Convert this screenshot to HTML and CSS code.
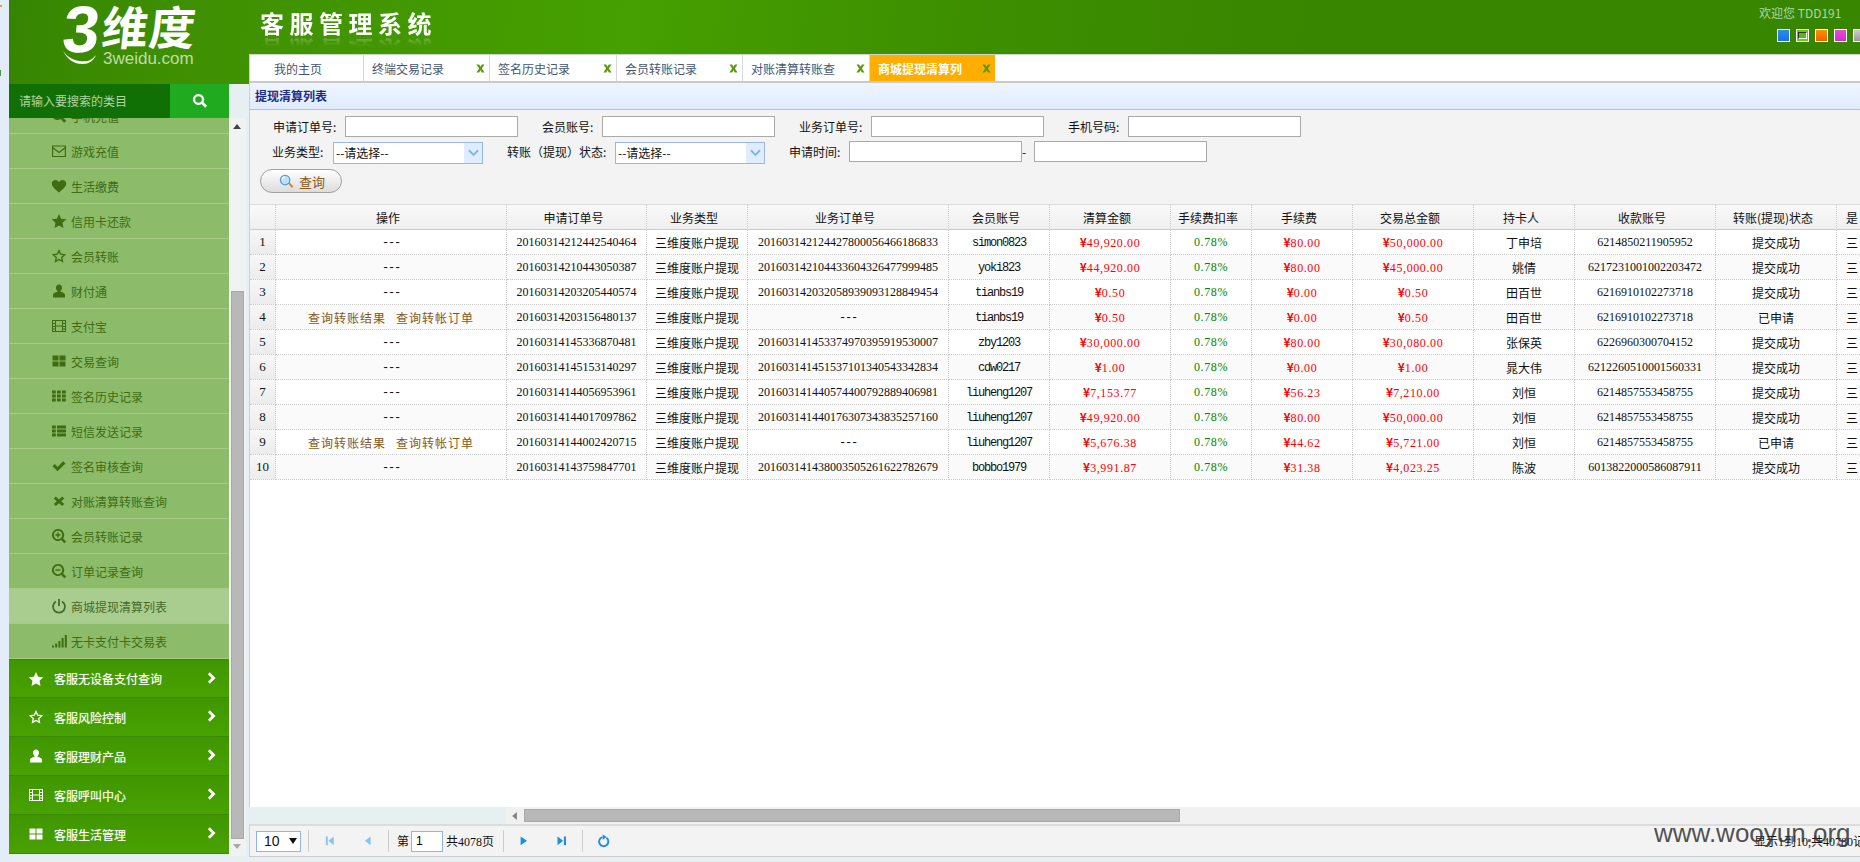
FILE: index.html
```html
<!DOCTYPE html>
<html lang="zh-CN">
<head>
  <meta charset="UTF-8">
  <title>客服管理系统</title>
  <link rel="stylesheet" href="styles.css">
</head>
<body>
  <svg class="sprite" xmlns="http://www.w3.org/2000/svg">
    <symbol id="i-search" viewBox="0 0 16 16"><path fill-rule="evenodd" d="M6.500 1a5.500 5.500 0 1 0 3.100 10l3.600 3.800 2-2-3.700-3.600A5.500 5.500 0 0 0 6.500 1zm0 2.200a3.300 3.300 0 1 1 0 6.600 3.300 3.300 0 0 1 0-6.600z"/></symbol>
    <symbol id="i-envelope" viewBox="0 0 16 16"><path fill="none" stroke="currentColor" stroke-width="1.200" d="M1.600 3h12.800v10.500H1.600zM1.600 4.500 8 9.500l6.400-5"/></symbol>
    <symbol id="i-heart" viewBox="0 0 16 16"><path d="M8 14.500C4 11.200.8 8.800.8 5.600.8 3.400 2.500 2 4.400 2 5.900 2 7.200 2.800 8 4.200 8.800 2.800 10.100 2 11.600 2c1.900 0 3.600 1.400 3.600 3.600 0 3.200-3.200 5.600-7.200 8.900z"/></symbol>
    <symbol id="i-star" viewBox="0 0 16 16"><path d="M8 1l2.200 4.700 5.100.6-3.800 3.500 1 5.100L8 12.400l-4.500 2.500 1-5.100L.7 6.300l5.100-.6z"/></symbol>
    <symbol id="i-star-o" viewBox="0 0 16 16"><path fill="none" stroke="currentColor" stroke-width="1.300" d="M8 2.500l1.700 3.700 4 .5-3 2.700.8 4L8 11.500l-3.500 1.900.8-4-3-2.700 4-.5z"/></symbol>
    <symbol id="i-user" viewBox="0 0 16 16"><path d="M8 1.500c1.900 0 3 1.500 3 3.300 0 1.300-.6 2.500-1.500 3.100v.8c2.500.6 4.500 1.500 4.500 3v2.800H2v-2.800c0-1.500 2-2.400 4.500-3v-.8C5.600 7.300 5 6.100 5 4.800c0-1.800 1.100-3.300 3-3.300z"/></symbol>
    <symbol id="i-film" viewBox="0 0 16 16"><path fill-rule="evenodd" d="M1 2h14v12H1zm1 1v2h2V3zm0 3v2h2V6zm0 3v1.500h2V9zm0 2.500V13h2v-1.500zM5 3v4.500h6V3zm0 5.500V13h6V8.500zM12 3v2h2V3zm0 3v2h2V6zm0 3v1.500h2V9zm0 2.500V13h2v-1.500z"/></symbol>
    <symbol id="i-large" viewBox="0 0 16 16"><path d="M1.500 2.500h6v5h-6zM8.500 2.500h6v5h-6zM1.500 8.500h6v5h-6zM8.500 8.500h6v5h-6z"/></symbol>
    <symbol id="i-th" viewBox="0 0 16 16"><path d="M1 2.500h3.800v3H1zM6 2.500h3.800v3H6zM11 2.500h3.800v3H11zM1 6.500h3.800v3H1zM6 6.500h3.800v3H6zM11 6.500h3.800v3H11zM1 10.500h3.800v3H1zM6 10.500h3.800v3H6zM11 10.500h3.800v3H11z"/></symbol>
    <symbol id="i-list" viewBox="0 0 16 16"><path d="M1 2.500h3.800v3H1zM6 2.500h9v3H6zM1 6.500h3.800v3H1zM6 6.500h9v3H6zM1 10.500h3.800v3H1zM6 10.500h9v3H6z"/></symbol>
    <symbol id="i-ok" viewBox="0 0 16 16"><path d="M1.500 8.200l2.300-2.100 2.700 2.800 5.700-5.600 2.300 2.200-8 7.800z"/></symbol>
    <symbol id="i-x" viewBox="0 0 16 16"><path d="M4.800 3.500 8 6.500l3.200-3 2 2L10.200 8.300l3 2.700-2 2L8 10.300 4.800 13l-2-2 3-2.700-3-2.800z"/></symbol>
    <symbol id="i-zoom-in" viewBox="0 0 16 16"><path fill-rule="evenodd" d="M7 1a6 6 0 1 0 3.300 11l3 3.300 1.800-1.800-3-3.100A6 6 0 0 0 7 1zm0 1.800a4.200 4.200 0 1 1 0 8.400 4.200 4.200 0 0 1 0-8.400z"/><path d="M6.300 4.500h1.400v1.800h1.800v1.400H7.700v1.800H6.300V7.700H4.500V6.300h1.800z"/></symbol>
    <symbol id="i-zoom-out" viewBox="0 0 16 16"><path fill-rule="evenodd" d="M7 1a6 6 0 1 0 3.300 11l3 3.300 1.800-1.800-3-3.100A6 6 0 0 0 7 1zm0 1.800a4.200 4.200 0 1 1 0 8.400 4.200 4.200 0 0 1 0-8.400z"/><path d="M4.500 6.300h5v1.400h-5z"/></symbol>
    <symbol id="i-off" viewBox="0 0 16 16"><path fill="none" stroke="currentColor" stroke-width="1.800" d="M5 3.500a6 6 0 1 0 6 0M8 1v7"/></symbol>
    <symbol id="i-signal" viewBox="0 0 16 16"><path d="M1 12.500h2v2H1zM4.200 10.500h2v4h-2zM7.400 8h2v6.500h-2zM10.600 5h2v9.500h-2zM13.800 2h2v12.500h-2z"/></symbol>
    <symbol id="i-chevron" viewBox="0 0 16 16"><path d="M5.500 1.500 12 8l-6.500 6.500-2.200-2.200L7.600 8 3.300 3.700z"/></symbol>
    <symbol id="i-close" viewBox="0 0 10 10"><path d="M.5.500h3L5 3 6.500.500h3L6.500 5l3 4.500h-3L5 7 3.500 9.500h-3L3.500 5z"/></symbol>
    <symbol id="i-first" viewBox="0 0 16 16"><path d="M2.500 2h2.500v11.500H2.500zM13 2v11.500L6 7.800z"/></symbol>
    <symbol id="i-prev" viewBox="0 0 16 16"><path d="M11.500 2v11.500L4 7.800z"/></symbol>
    <symbol id="i-next" viewBox="0 0 16 16"><path d="M3.500 2v11.500L12 7.800z"/></symbol>
    <symbol id="i-last" viewBox="0 0 16 16"><path d="M2 2v11.500L9.500 7.800zM10.500 2h2.800v11.500h-2.800z"/></symbol>
    <symbol id="i-reload" viewBox="0 0 16 16"><path fill="none" stroke="currentColor" stroke-width="2.200" d="M10.800 4.300A5.300 5.300 0 1 1 6.200 3.500"/><path d="M6.500.500l4.500 3-4.500 3z"/></symbol>
    <symbol id="i-tail" viewBox="0 0 40 18"><path d="M1 3c5 8 14 12 24 12 5 0 9-2 13-7-3 7-8 10-15 10C13 18 5 12 1 3z"/></symbol>
  </svg>

  <div class="shell">
    <div class="edge"><i class="mark-a"></i><i class="mark-b"></i></div>

    <aside class="side">
      <div class="logo">
        <div class="logo-mark"><span class="logo-three">3</span><span class="logo-word">维度</span></div>
        <div class="logo-foot"><svg class="logo-tail"><use href="#i-tail"/></svg><span class="logo-url">3weidu.com</span></div>
      </div>
      <div class="side-search">
        <div class="search-box">请输入要搜索的类目</div>
        <div class="search-btn"><svg class="icon"><use href="#i-search"/></svg></div>
      </div>
      <div class="side-body">
        <nav class="menu">
          <ul class="submenu">
            <li><svg class="icon"><use href="#i-search"/></svg>手机充值</li>
            <li><svg class="icon"><use href="#i-envelope"/></svg>游戏充值</li>
            <li><svg class="icon"><use href="#i-heart"/></svg>生活缴费</li>
            <li><svg class="icon"><use href="#i-star"/></svg>信用卡还款</li>
            <li><svg class="icon"><use href="#i-star-o"/></svg>会员转账</li>
            <li><svg class="icon"><use href="#i-user"/></svg>财付通</li>
            <li><svg class="icon"><use href="#i-film"/></svg>支付宝</li>
            <li><svg class="icon"><use href="#i-large"/></svg>交易查询</li>
            <li><svg class="icon"><use href="#i-th"/></svg>签名历史记录</li>
            <li><svg class="icon"><use href="#i-list"/></svg>短信发送记录</li>
            <li><svg class="icon"><use href="#i-ok"/></svg>签名审核查询</li>
            <li><svg class="icon"><use href="#i-x"/></svg>对账清算转账查询</li>
            <li><svg class="icon"><use href="#i-zoom-in"/></svg>会员转账记录</li>
            <li><svg class="icon"><use href="#i-zoom-out"/></svg>订单记录查询</li>
            <li class="current"><svg class="icon"><use href="#i-off"/></svg>商城提现清算列表</li>
            <li><svg class="icon"><use href="#i-signal"/></svg>无卡支付卡交易表</li>
          </ul>
          <div class="topitem"><svg class="icon"><use href="#i-star"/></svg><span>客服无设备支付查询</span><svg class="icon chev"><use href="#i-chevron"/></svg></div>
          <div class="topitem"><svg class="icon"><use href="#i-star-o"/></svg><span>客服风险控制</span><svg class="icon chev"><use href="#i-chevron"/></svg></div>
          <div class="topitem"><svg class="icon"><use href="#i-user"/></svg><span>客服理财产品</span><svg class="icon chev"><use href="#i-chevron"/></svg></div>
          <div class="topitem"><svg class="icon"><use href="#i-film"/></svg><span>客服呼叫中心</span><svg class="icon chev"><use href="#i-chevron"/></svg></div>
          <div class="topitem"><svg class="icon"><use href="#i-large"/></svg><span>客服生活管理</span><svg class="icon chev"><use href="#i-chevron"/></svg></div>
        </nav>
        <div class="side-scroll">
          <i class="arrow-up"></i>
          <div class="thumb"></div>
          <i class="arrow-down"></i>
        </div>
      </div>
    </aside>

    <main class="main">
      <header class="topbar">
        <div class="sys-title">客服管理系统</div>
        <div class="user-box">
          <div class="welcome">欢迎您 TDD191</div>
          <div class="skins">
            <i class="skin skin-blue"></i><i class="skin skin-green"></i><i class="skin skin-orange"></i><i class="skin skin-pink"></i><i class="skin skin-gray"></i>
          </div>
        </div>
      </header>

      <div class="tabs">
        <div class="tab tab-home">我的主页</div>
        <div class="tab">终端交易记录<svg class="tab-x"><use href="#i-close"/></svg></div>
        <div class="tab tab-wide">签名历史记录<svg class="tab-x"><use href="#i-close"/></svg></div>
        <div class="tab">会员转账记录<svg class="tab-x"><use href="#i-close"/></svg></div>
        <div class="tab tab-wide">对账清算转账查<svg class="tab-x"><use href="#i-close"/></svg></div>
        <div class="tab tab-active">商城提现清算列<svg class="tab-x"><use href="#i-close"/></svg></div>
      </div>

      <div class="panel-title">提现清算列表</div>

      <form class="filters">
        <div class="filter-row">
          <label class="w72">申请订单号:</label><input class="txt" type="text">
          <label class="w60 gap">会员账号:</label><input class="txt" type="text">
          <label class="w72 gap">业务订单号:</label><input class="txt" type="text">
          <label class="w60 gap">手机号码:</label><input class="txt" type="text">
        </div>
        <div class="filter-row row-two">
          <label class="w61">业务类型:</label>
          <div class="combo"><span class="combo-text">--请选择--</span><span class="combo-arrow"><svg viewBox="0 0 12 8"><path d="M1 1l5 5 5-5" fill="none" stroke="currentColor" stroke-width="2"/></svg></span></div>
          <label class="w108 gap">转账（提现）状态:</label>
          <div class="combo"><span class="combo-text">--请选择--</span><span class="combo-arrow"><svg viewBox="0 0 12 8"><path d="M1 1l5 5 5-5" fill="none" stroke="currentColor" stroke-width="2"/></svg></span></div>
          <label class="w60 gap">申请时间:</label><input class="txt" type="text"><span class="dash">-</span><input class="txt" type="text">
        </div>
        <button class="query-btn" type="button">
          <svg class="query-icon" viewBox="0 0 16 16"><path d="M9.800 10l1.500-1.200 4 4.600-1.700 1.500z" fill="#d98a1e"/><circle cx="6.500" cy="6.500" r="5" fill="#bfe0f7" stroke="#5b9bd0" stroke-width="1.300"/><path d="M3.500 6a3 3 0 0 1 3-3" fill="none" stroke="#fff" stroke-width="1.300"/></svg>
          查询
        </button>
      </form>

      <div class="grid">
        <table class="data">
          <colgroup>
            <col class="c26"><col class="c231"><col class="c140"><col class="c101"><col class="c201"><col class="c101"><col class="c121"><col class="c81"><col class="c101"><col class="c121"><col class="c101"><col class="c141"><col class="c121"><col class="c101">
          </colgroup>
          <thead>
            <tr>
              <th></th><th>操作</th><th>申请订单号</th><th>业务类型</th><th>业务订单号</th><th>会员账号</th><th>清算金额</th><th>手续费扣率</th><th>手续费</th><th>交易总金额</th><th>持卡人</th><th>收款账号</th><th>转账(提现)状态</th><th class="cut">是</th>
            </tr>
          </thead>
          <tbody>
            <tr><td class="idx">1</td><td class="mono">---</td><td class="num">20160314212442540464</td><td>三维度账户提现</td><td class="num">201603142124427800056466186833</td><td class="mono">simon0823</td><td class="amt"><b>¥</b>49,920.00</td><td class="rate">0.78%</td><td class="amt"><b>¥</b>80.00</td><td class="amt"><b>¥</b>50,000.00</td><td>丁申培</td><td class="num">6214850211905952</td><td>提交成功</td><td class="cut">三</td></tr>
            <tr><td class="idx">2</td><td class="mono">---</td><td class="num">20160314210443050387</td><td>三维度账户提现</td><td class="num">201603142104433604326477999485</td><td class="mono">yoki823</td><td class="amt"><b>¥</b>44,920.00</td><td class="rate">0.78%</td><td class="amt"><b>¥</b>80.00</td><td class="amt"><b>¥</b>45,000.00</td><td>姚倩</td><td class="num">6217231001002203472</td><td>提交成功</td><td class="cut">三</td></tr>
            <tr><td class="idx">3</td><td class="mono">---</td><td class="num">20160314203205440574</td><td>三维度账户提现</td><td class="num">201603142032058939093128849454</td><td class="mono">tianbs19</td><td class="amt"><b>¥</b>0.50</td><td class="rate">0.78%</td><td class="amt"><b>¥</b>0.00</td><td class="amt"><b>¥</b>0.50</td><td>田百世</td><td class="num">6216910102273718</td><td>提交成功</td><td class="cut">三</td></tr>
            <tr><td class="idx">4</td><td><a class="op">查询转账结果</a><a class="op">查询转帐订单</a></td><td class="num">20160314203156480137</td><td>三维度账户提现</td><td class="mono">---</td><td class="mono">tianbs19</td><td class="amt"><b>¥</b>0.50</td><td class="rate">0.78%</td><td class="amt"><b>¥</b>0.00</td><td class="amt"><b>¥</b>0.50</td><td>田百世</td><td class="num">6216910102273718</td><td>已申请</td><td class="cut">三</td></tr>
            <tr><td class="idx">5</td><td class="mono">---</td><td class="num">20160314145336870481</td><td>三维度账户提现</td><td class="num">201603141453374970395919530007</td><td class="mono">zby1203</td><td class="amt"><b>¥</b>30,000.00</td><td class="rate">0.78%</td><td class="amt"><b>¥</b>80.00</td><td class="amt"><b>¥</b>30,080.00</td><td>张保英</td><td class="num">6226960300704152</td><td>提交成功</td><td class="cut">三</td></tr>
            <tr><td class="idx">6</td><td class="mono">---</td><td class="num">20160314145153140297</td><td>三维度账户提现</td><td class="num">201603141451537101340543342834</td><td class="mono">cdw0217</td><td class="amt"><b>¥</b>1.00</td><td class="rate">0.78%</td><td class="amt"><b>¥</b>0.00</td><td class="amt"><b>¥</b>1.00</td><td>晁大伟</td><td class="num">6212260510001560331</td><td>提交成功</td><td class="cut">三</td></tr>
            <tr><td class="idx">7</td><td class="mono">---</td><td class="num">20160314144056953961</td><td>三维度账户提现</td><td class="num">201603141440574400792889406981</td><td class="mono">liuheng1207</td><td class="amt"><b>¥</b>7,153.77</td><td class="rate">0.78%</td><td class="amt"><b>¥</b>56.23</td><td class="amt"><b>¥</b>7,210.00</td><td>刘恒</td><td class="num">6214857553458755</td><td>提交成功</td><td class="cut">三</td></tr>
            <tr><td class="idx">8</td><td class="mono">---</td><td class="num">20160314144017097862</td><td>三维度账户提现</td><td class="num">201603141440176307343835257160</td><td class="mono">liuheng1207</td><td class="amt"><b>¥</b>49,920.00</td><td class="rate">0.78%</td><td class="amt"><b>¥</b>80.00</td><td class="amt"><b>¥</b>50,000.00</td><td>刘恒</td><td class="num">6214857553458755</td><td>提交成功</td><td class="cut">三</td></tr>
            <tr><td class="idx">9</td><td><a class="op">查询转账结果</a><a class="op">查询转帐订单</a></td><td class="num">20160314144002420715</td><td>三维度账户提现</td><td class="mono">---</td><td class="mono">liuheng1207</td><td class="amt"><b>¥</b>5,676.38</td><td class="rate">0.78%</td><td class="amt"><b>¥</b>44.62</td><td class="amt"><b>¥</b>5,721.00</td><td>刘恒</td><td class="num">6214857553458755</td><td>已申请</td><td class="cut">三</td></tr>
            <tr><td class="idx">10</td><td class="mono">---</td><td class="num">20160314143759847701</td><td>三维度账户提现</td><td class="num">201603141438003505261622782679</td><td class="mono">bobbo1979</td><td class="amt"><b>¥</b>3,991.87</td><td class="rate">0.78%</td><td class="amt"><b>¥</b>31.38</td><td class="amt"><b>¥</b>4,023.25</td><td>陈波</td><td class="num">6013822000586087911</td><td>提交成功</td><td class="cut">三</td></tr>
          </tbody>
        </table>
      </div>

      <div class="hscroll">
        <i class="arrow-left"></i>
        <div class="hthumb"></div>
      </div>

      <div class="pager">
        <div class="page-size">10<i class="caret"></i></div>
        <i class="sep"></i>
        <svg class="pg-icon off first"><use href="#i-first"/></svg>
        <svg class="pg-icon off"><use href="#i-prev"/></svg>
        <i class="sep"></i>
        <span class="pg-text">第</span><input class="pg-input" type="text" value="1"><span class="pg-text pg-total">共4078页</span>
        <i class="sep"></i>
        <svg class="pg-icon"><use href="#i-next"/></svg>
        <svg class="pg-icon"><use href="#i-last"/></svg>
        <i class="sep"></i>
        <svg class="pg-icon reload"><use href="#i-reload"/></svg>
        <span class="pg-text pg-info">显示1到10,共40780记录</span>
      </div>
    </main>
  </div>

  <div class="watermark">www.wooyun.org</div>
</body>
</html>
```

FILE: styles.css
```css
* { box-sizing: border-box; }
html, body { margin: 0; padding: 0; height: 100%; overflow: hidden; }
body { font-family: "Noto Sans CJK SC", "Liberation Sans", sans-serif; font-size: 12px; color: #111; background: #e6eff1; }
ul { margin: 0; padding: 0; list-style: none; }
i { display: block; }
.sprite { display: none; }
.icon { width: 16px; height: 16px; fill: currentColor; flex: none; }

.shell { display: flex; width: 1900px; height: 862px; background: linear-gradient(96deg, #358502 0, #3f8f02 170px, #46a000 620px, #3e9100 900px, #388500 1300px) 9px 0 / 1860px 84px no-repeat; }
.edge { width: 9px; flex: none; background: #e3edf9; display: flex; flex-direction: column; }
.mark-a { width: 2px; height: 2px; margin-top: 5px; background: #f0a020; }
.mark-b { width: 1px; height: 6px; margin-top: 63px; background: #4a9a3a; }

/* left column */
.side { width: 240px; flex: none; display: flex; flex-direction: column; }
.logo { height: 84px; padding-left: 52px; color: #fff; }
.logo-mark { display: flex; height: 50px; transform: skewX(-6deg); transform-origin: left bottom; }
.logo-three { width: 39px; font: 700 66px/58px "Liberation Sans", sans-serif; }
.logo-word { font-size: 46px; line-height: 50px; font-weight: 700; letter-spacing: 1px; white-space: nowrap; }
.logo-foot { display: flex; align-items: flex-start; }
.logo-tail { width: 38px; height: 16px; margin: -2px 4px 0 0; fill: #fff; flex: none; }
.logo-url { margin-left: 0; font: 17px/17px "Liberation Sans", sans-serif; color: #bfdca8; }

.side-search { display: flex; height: 34px; width: 220px; }
.search-box { width: 161px; padding-left: 10px; line-height: 34px; background: #107006; color: #b4d2a6; }
.search-btn { width: 59px; background: #20aa20; color: #fff; display: flex; align-items: center; justify-content: center; }

.side-body { display: flex; flex: 1; min-height: 0; }
.menu { width: 220px; height: 736px; display: flex; flex-direction: column; }
.submenu { flex: 1; overflow: hidden; }
.submenu li { display: flex; align-items: center; height: 35px; padding-left: 42px; background: #8cbb69; border-bottom: 1px solid #a6cc88; color: #3f6c12; }
.submenu li:first-child { margin-top: -19px; }
.submenu li .icon { margin-right: 4px; }
.submenu li.current { background: #a9cd8f; color: #466a28; }
.topitem { display: flex; align-items: center; height: 39px; padding-left: 19px; color: #fff; background: linear-gradient(#409600, #48a200); border-bottom: 1px solid #3a8a00; }
.topitem:first-of-type { border-top: 1px solid #3a8a00; }
.topitem span { margin-left: 10px; width: 147px; text-shadow: 0 0 1px rgba(255,255,255,.5); }
.topitem .chev { width: 14px; height: 14px; margin-left: 4px; margin-top: -2px; }

.side-scroll { width: 17px; height: 738px; background: #f1f3f3; padding: 6px 0 0 2px; flex: none; }
.arrow-up { width: 0; height: 0; margin-left: 2px; border: 4px solid transparent; border-top: 0; border-bottom: 5px solid #444; }
.thumb { width: 13px; height: 548px; margin-top: 162px; background: #b8b8b8; border: 1px solid #a8a8a8; }
.arrow-down { width: 0; height: 0; margin: 5px 0 0 2px; border: 4px solid transparent; border-bottom: 0; border-top: 5px solid #a8a8a8; }

/* right column */
.main { width: 1636px; flex: none; display: flex; flex-direction: column; height: 857px; }
.topbar { height: 54px; flex: none; display: flex; justify-content: space-between; color: #fff; }
.sys-title { margin: 8px 0 0 11px; height: 30px; font-size: 24px; line-height: 30px; font-weight: 700; letter-spacing: 5.5px; -webkit-box-reflect: below -2px linear-gradient(transparent 65%, rgba(255,255,255,.3)); }
.user-box { width: 127px; margin-right: 8px; flex: none; padding-top: 5px; }
.welcome { color: #a9d8ab; line-height: 16px; padding-left: 9px; white-space: nowrap; }
.skins { display: flex; gap: 6px; margin-top: 8px; padding-left: 27px; }
.skin { width: 13px; height: 13px; flex: none; border: 1px solid #fff; }
.skin-blue { background: linear-gradient(#2a8cf0, #1e70e0); }
.skin-green { display: flex; align-items: center; justify-content: center; background: #66cc11; }
.skin-green::after { content: ""; width: 7px; height: 5px; background: #5cb80f; border: 1px solid #fff; border-top-color: #333; border-left-color: #333; }
.skin-orange { background: linear-gradient(#ff9000, #f06000); }
.skin-pink { background: linear-gradient(#e848d8, #d030c0); }
.skin-gray { background: linear-gradient(#ccc, #999); }

.tabs { display: flex; height: 29px; flex: none; background: #fff; border-top: 1px solid #cfd6cf; border-bottom: 2px solid #cacaca; border-left: 1px solid #c8d2d8; }
.tab { display: flex; align-items: center; justify-content: space-between; width: 126px; height: 26px; padding: 0 4px 0 8px; color: #45566e; border-right: 1px solid #d8d8d8; }
.tab-wide { width: 127px; }
.tab-home { width: 114px; padding-left: 24px; justify-content: flex-start; }
.tab-x { width: 9px; height: 9px; fill: #5c9a0a; }
.tab-active { width: 125px; background: #ffae00; color: #fff; font-weight: 700; border-right: 0; }

.panel-title { height: 27px; flex: none; padding-left: 5px; line-height: 26px; font-weight: 700; color: #1c2c85; background: linear-gradient(#eff5ff, #e0ecff); border-bottom: 1px solid #a9c4e8; border-left: 1px solid #c8d2d8; }

.filters { height: 94px; flex: none; background: #f3f3f3; padding: 6px 0 0 23px; border-left: 1px solid #c8d2d8; }
.filter-row { display: flex; align-items: flex-start; height: 21px; line-height: 21px; }
.row-two { margin: 4px 0 0 -1px; height: 23px; }
.row-two .combo { margin-top: 1px; }
.gap { margin-left: 24px; }
.w60 { width: 60px; }
.w61 { width: 61px; }
.w72 { width: 72px; }
.w108 { width: 108px; }
.txt { width: 173px; height: 21px; padding: 0 4px; border: 1px solid #aaa; background: #fff; flex: none; outline: 0; }
.dash { width: 12px; flex: none; }
.combo { display: flex; justify-content: space-between; width: 150px; height: 22px; flex: none; background: #fff; border: 1px solid #95b8e7; line-height: 20px; }
.combo-text { padding-left: 2px; }
.combo-arrow { width: 18px; background: #e0ecff; color: #7fb5ea; display: flex; align-items: center; justify-content: center; }
.combo-arrow svg { width: 11px; height: 8px; }
.query-btn { display: flex; align-items: center; width: 82px; height: 24px; margin: 5px 0 0 -13px; padding: 0 0 0 18px; border: 1px solid #a0a0a0; border-radius: 12px; background: linear-gradient(#fff, #dcdcdc); color: #8a5a18; font: 13px "Noto Sans CJK SC", sans-serif; }
.query-icon { width: 15px; height: 15px; margin-right: 5px; }

.grid { flex: 1; min-height: 0; overflow: hidden; background: #fff; border-left: 1px solid #c8d2d8; }
.data { table-layout: fixed; width: 1688px; border-collapse: separate; border-spacing: 0; }
.c26 { width: 26px; } .c81 { width: 81px; } .c101 { width: 101px; } .c121 { width: 121px; } .c140 { width: 140px; } .c141 { width: 141px; } .c201 { width: 201px; } .c231 { width: 231px; }
.data th { height: 26px; padding: 0 6px 0 0; font-weight: 400; white-space: nowrap; background: linear-gradient(#f9f9f9, #efefef); border-top: 1px solid #ddd; border-right: 1px dotted #ccc; border-bottom: 1px solid #ccc; }
.data td { height: 25px; padding: 0; text-align: center; white-space: nowrap; border-right: 1px dotted #ccc; border-bottom: 1px dotted #ccc; }
.data tbody tr:nth-child(even) td { background: #fafafa; }
.data tbody tr td.idx { background: linear-gradient(#f7f7f7, #ececec); font: 13px "Liberation Serif", serif; }
.data .num { font-family: "Liberation Serif", serif; }
.data .mono { padding-top: 1px; font-family: "Liberation Mono", monospace; letter-spacing: -1.2px; }
.data .amt, .data .rate { font-family: "Liberation Serif", "Noto Sans CJK SC", serif; letter-spacing: .6px; }
.data .amt { color: #f00; }
.data .amt b { font: 700 12px "Noto Sans CJK SC", sans-serif; letter-spacing: 0; }
.data .rate { color: #080; }
.data th.cut, .data td.cut { text-align: left; padding-left: 9px; }
.op { color: #85591a; letter-spacing: 1px; }
.op + .op { margin-left: 10px; }

.hscroll { display: flex; align-items: center; height: 17px; flex: none; margin-left: 257px; background: #f1f1f1; }
.arrow-left { width: 0; height: 0; margin-left: 6px; border: 4px solid transparent; border-left: 0; border-right: 5px solid #888; }
.hthumb { width: 656px; height: 13px; margin-left: 7px; background: #b8b8b8; border: 1px solid #a8a8a8; }

.pager { display: flex; align-items: center; height: 33px; flex: none; padding-left: 6px; background: #f3f3f3; border-top: 2px solid #dcdcdc; border-bottom: 1px solid #cbcbcb; border-left: 1px solid #c8d2d8; }
.page-size { display: flex; align-items: center; justify-content: space-between; width: 45px; height: 21px; padding: 0 3px 0 7px; background: #fff; border: 1px solid #8db5e6; font: 14px "Liberation Sans", sans-serif; }
.caret { width: 0; height: 0; border: 4px solid transparent; border-bottom: 0; border-top: 6px solid #111; }
.sep { width: 1px; height: 22px; flex: none; background: #ccc; margin-left: 14px; }
.page-size + .sep { margin-left: 7px; }
.pg-total + .sep { margin-left: 9px; }
.pg-icon { width: 12px; height: 14px; flex: none; fill: #1c8fe2; color: #1c8fe2; margin-left: 26px; }
.sep + .pg-icon { margin-left: 14px; }
.pg-icon.off { fill: #86c3ef; }
.pg-icon.first { margin-left: 15px; }
.pg-icon.reload { width: 14px; }
.pg-text { font-family: "Liberation Serif", "Noto Sans CJK SC", serif; white-space: nowrap; }
.sep + .pg-text { margin-left: 8px; }
.pg-input { width: 32px; height: 21px; margin: 0 3px 0 2px; padding: 0 4px; border: 1px solid #8db5e6; outline: 0; background: #fff; font: 12px "Liberation Sans", sans-serif; }
.pg-info { margin-left: auto; padding-right: 8px; }

.watermark { position: absolute; left: 1654px; top: 816px; font: 26px/34px "Liberation Sans", sans-serif; color: rgba(50, 50, 50, .85); white-space: nowrap; }
```
